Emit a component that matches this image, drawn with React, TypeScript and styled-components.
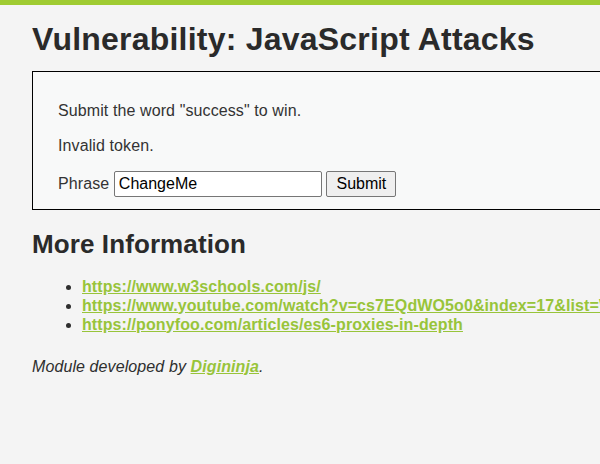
import React from "react";
import styled, { createGlobalStyle } from "styled-components";

const Global = createGlobalStyle`
  html, body { margin: 0; padding: 0; overflow: hidden; background: #f4f4f4; }
  body { font-family: "Liberation Sans", Arial, sans-serif; font-size: 16px; line-height: 1.2; color: #2e2e2e; letter-spacing: 0.1px; }
`;

const TopBar = styled.div`
  height: 5px;
  background: #9fcb32;
`;

const Main = styled.div`
  width: 720px;
  padding: 15px 0 0 32px;
`;

const Title = styled.h1`
  margin: 0 0 12.6px;
  font-size: 32px;
  font-weight: bold;
  color: #2a2a2a;
  line-height: 1.2;
  letter-spacing: 0.22px;
`;

const CodeArea = styled.div`
  border: 1px solid #000;
  background: #f8f9f9;
  padding: 13px 25px 0;
`;

const Para = styled.p<{ $last?: boolean }>`
  margin: 16px 0 ${(p) => (p.$last ? "12px" : "16px")};
  color: #333;
`;

const TextInput = styled.input`
  box-sizing: border-box;
  width: 208px;
  height: 26px;
  font: 16px "Liberation Sans", Arial, sans-serif;
  color: #000;
  padding: 1px 4px;
  border: 1px solid #767676;
  border-radius: 2px;
  background: #fff;
  vertical-align: baseline;
`;

const Button = styled.button`
  box-sizing: border-box;
  width: 70px;
  height: 26px;
  font: 16px "Liberation Sans", Arial, sans-serif;
  color: #000;
  background: #efefef;
  border: 1px solid #767676;
  border-radius: 2px;
  padding: 1px 6px;
`;

const SubTitle = styled.h2`
  margin: 19px 0 16px;
  font-size: 26px;
  font-weight: bold;
  color: #2a2a2a;
  line-height: 1.2;
`;

const LinkList = styled.ul`
  margin: 0;
  padding-left: 50px;
  line-height: 19px;
  & > li { line-height: 19px; }
`;

const Link = styled.a`
  color: #98c43a;
  font-weight: bold;
  text-decoration: underline;
  white-space: nowrap;
`;

const Credit = styled.p`
  margin: 23px 0 0;
  font-style: italic;
  color: #2e2e2e;
`;

export default function App() {
  return (
    <>
      <Global />
      <TopBar />
      <Main>
        <Title>Vulnerability: JavaScript Attacks</Title>
        <CodeArea>
          <Para>Submit the word "success" to win.</Para>
          <Para>Invalid token.</Para>
          <Para $last>
            Phrase <TextInput type="text" defaultValue="ChangeMe" /> <Button>Submit</Button>
          </Para>
        </CodeArea>
        <SubTitle>More Information</SubTitle>
        <LinkList>
          <li><Link href="#">https://www.w3schools.com/js/</Link></li>
          <li><Link href="#">https://www.youtube.com/watch?v=cs7EQdWO5o0&amp;index=17&amp;list=WL</Link></li>
          <li><Link href="#">https://ponyfoo.com/articles/es6-proxies-in-depth</Link></li>
        </LinkList>
        <Credit>
          Module developed by <Link href="#">Digininja</Link>.
        </Credit>
      </Main>
    </>
  );
}
